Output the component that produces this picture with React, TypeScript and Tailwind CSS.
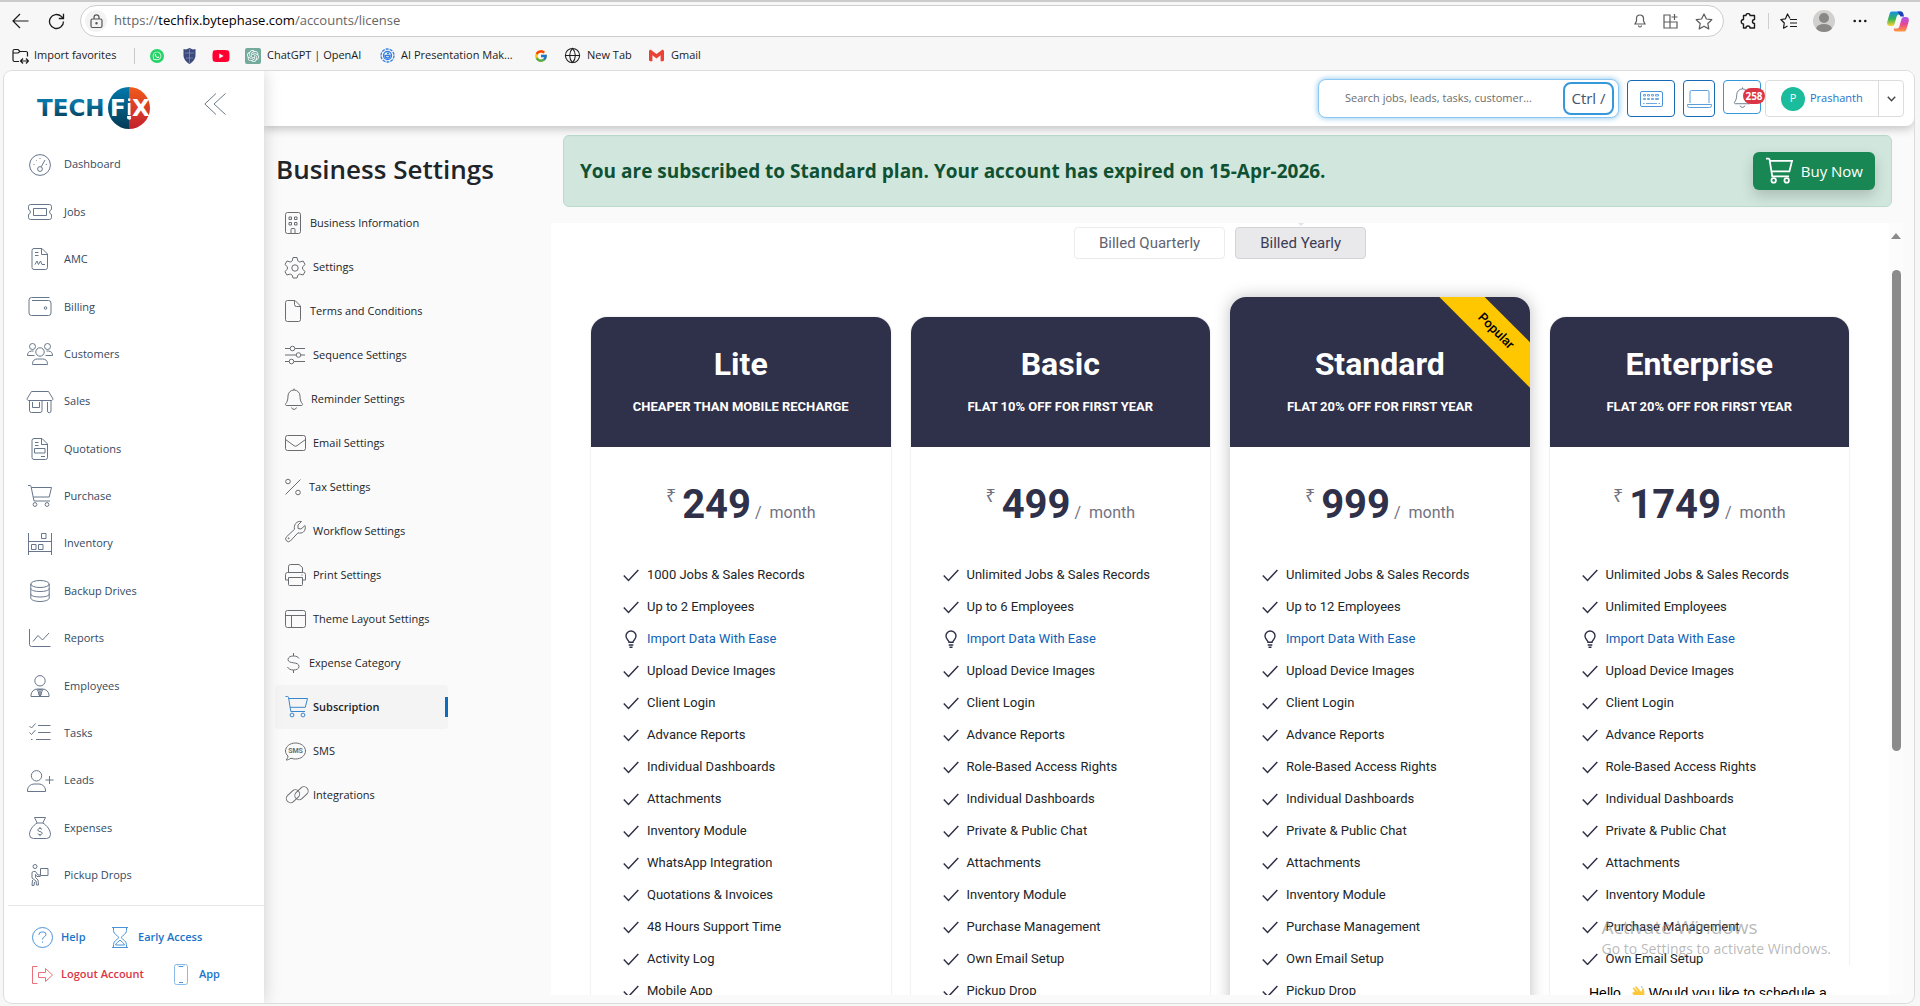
import React from 'react';
import { FcGoogle } from 'react-icons/fc';
import { SiOpenai, SiGmail } from 'react-icons/si';
import { FaWhatsapp, FaYoutube } from 'react-icons/fa';
import { LuGlobe } from 'react-icons/lu';

const UI = "font-['Open_Sans','Noto_Sans',sans-serif]";

/* ---------- thin line icons, drawn on a 26x22 grid ---------- */

const navArt: Record<string, React.ReactNode> = {
  dashboard: (
    <>
      <circle cx="13" cy="11" r="10.4" />
      <circle cx="13" cy="15" r="2.4" />
      <path d="M14.2 12.8 18 6M6.5 10.5h1M9 6l.6.6M13 4v.9M18.8 10.5h1" />
    </>
  ),
  jobs: (
    <>
      <path d="M3.5 3.5h19a2 2 0 0 1 2 2v3a2.6 2.6 0 0 0 0 5v3a2 2 0 0 1-2 2h-19a2 2 0 0 1-2-2v-3a2.6 2.6 0 0 0 0-5v-3a2 2 0 0 1 2-2z" />
      <path d="M6.5 7.5h13v7h-13z" />
    </>
  ),
  amc: (
    <>
      <path d="M7 .5h8l5.500 5.500v13.500a2 2 0 0 1-2 2H7a2 2 0 0 1-2-2v-17a2 2 0 0 1 2-2zM14.500.5v6h6M8 4.500h3.500M8 7.500h3.500M8 16.500l2-3.500 1.500 3.500 2-3.500 1.500 3.500h3" />
    </>
  ),
  billing: (
    <>
      <path d="M22.500 1.500H4.500a2.500 2.500 0 0 0-2.500 2.500v13a2.500 2.500 0 0 0 2.500 2.500h17a2.500 2.500 0 0 0 2.500-2.500V7a2.500 2.500 0 0 0-2.500-2.500H5" />
      <circle cx="18.500" cy="12" r="1.300" />
    </>
  ),
  customers: (
    <>
      <circle cx="5.500" cy="3.500" r="3" />
      <circle cx="20.500" cy="3.500" r="3" />
      <circle cx="13" cy="9" r="4.200" />
      <path d="M5.500 21.500v-1a5 5 0 0 1 5-4.500h5a5 5 0 0 1 5 4.500v1zM7.500 12.500h-7a4.500 4.500 0 0 1 4-4.500h2M18.500 12.500h7a4.500 4.500 0 0 0-4-4.500h-2" />
    </>
  ),
  sales: (
    <>
      <path d="M4.500.5h17l4 6.500a1.500 1.500 0 0 1-1.300 2.500H1.800A1.500 1.500 0 0 1 .5 7zM2.500 9.500v10a2 2 0 0 0 2 2h8.500a2 2 0 0 0 2-2v-10M5.500 11v5.500h7V11M20.500 11v9a1.500 1.500 0 0 0 3.500 0v-10" />
    </>
  ),
  quotations: (
    <path d="M7 .5h8l5.500 5.500v13.500a2 2 0 0 1-2 2H7a2 2 0 0 1-2-2v-17a2 2 0 0 1 2-2zM14.500.5v6h6M8 4.500h3.500M8 7.500h3.500M7.500 10.500h10.500v4.500H7.500zM14 18.500h4" />
  ),
  purchase: (
    <>
      <path d="M1 .5h2a1 1 0 0 1 1 .8l3 14.700h16M4.500 2.500H24.500l-2.300 9.500H6.300" />
      <circle cx="8" cy="19.500" r="1.900" />
      <circle cx="20" cy="19.500" r="1.900" />
    </>
  ),
  inventory: (
    <path d="M1.500 0v22M24.500 0v22M1.500 8.500h23M1.500 18.500h23M14.500.5h4.500v5h-4.500zM4.500 11.500H9v5H4.500zM11.500 11.500H16v5h-4.500z" />
  ),
  backup: (
    <>
      <ellipse cx="13" cy="4" rx="9.200" ry="3.500" />
      <path d="M3.800 4v14c0 1.900 4.100 3.500 9.200 3.500s9.200-1.600 9.200-3.500V4M3.800 8.500c0 1.900 4.100 3 9.200 3s9.200-1.100 9.200-3M3.800 14c0 1.900 4.100 3 9.200 3s9.200-1.100 9.200-3" />
    </>
  ),
  reports: <path d="M2.500 2v15.500a2 2 0 0 0 2 2H23.500M6 14.500l5-6 4.500 4.500 6.500-7" />,
  employees: (
    <>
      <circle cx="13" cy="5.800" r="5.200" />
      <path d="M4 21.500v-1.500a6.500 6.500 0 0 1 6.500-6h5a6.500 6.500 0 0 1 6.500 6v1.500zM10 14l3 7 3-7M11.500 14.500h3l-1 2 .8 3-1.300 2-1.300-2 .8-3z" />
    </>
  ),
  tasks: <path d="M2.500 4l2 2 4-4.500M2.500 10.500l2 2 4-4.500M4 17.500h1.500M11 3.500h12.500M11 10.500h12.500M9 17.500h14.500" />,
  leads: (
    <>
      <circle cx="9.500" cy="5.800" r="5.200" />
      <path d="M.5 21.500V20a6.500 6.500 0 0 1 6.500-6h5a6.500 6.500 0 0 1 6.500 6v1.500zM22.500 6v8M18.500 10h8" />
    </>
  ),
  expenses: (
    <path d="M7.500.5h11l-2.700 5.500h-5.600zM10.200 6C6 8.500 2.500 13 2.500 17.500a4 4 0 0 0 4 4h13a4 4 0 0 0 4-4C23.500 13 20 8.500 15.800 6M15 12.500c-.4-.8-1.200-1-2-1-1.200 0-2.200.5-2.200 1.500 0 2.200 4.400.9 4.400 3.200 0 1-1 1.500-2.200 1.500-1 0-1.800-.4-2.300-1.200M13 10v1.500M13 17.700v1.500" />
  ),
  pickup: (
    <>
      <circle cx="8" cy="2.500" r="2" />
      <path d="M13.500 4.500H21v7h-7.500zM13.500 11H11L8.500 7.500h-2a1.500 1.500 0 0 0-1.500 1.500v5l4 3 .5 4h2l-.5-5-2.500-2.500v-3l1.500 2h3.500M5.500 16 5 21.500h2l.5-3.500" />
    </>
  ),
};

const sideNav: [string, string][] = [
  ['dashboard', 'Dashboard'],
  ['jobs', 'Jobs'],
  ['amc', 'AMC'],
  ['billing', 'Billing'],
  ['customers', 'Customers'],
  ['sales', 'Sales'],
  ['quotations', 'Quotations'],
  ['purchase', 'Purchase'],
  ['inventory', 'Inventory'],
  ['backup', 'Backup Drives'],
  ['reports', 'Reports'],
  ['employees', 'Employees'],
  ['tasks', 'Tasks'],
  ['leads', 'Leads'],
  ['expenses', 'Expenses'],
  ['pickup', 'Pickup Drops'],
];

/* settings icons: [width of the drawing, art], 22 units high */
const settingsArt: Record<string, [number, React.ReactNode]> = {
  building: [
    16,
    <path d="M2.500.5h11a2 2 0 0 1 2 2v17a2 2 0 0 1-2 2h-11a2 2 0 0 1-2-2v-17a2 2 0 0 1 2-2zM4 5h2.500v2.500H4zM9.500 5H12v2.500H9.500zM4 10.500h2.500v2.500H4zM9.500 10.500H12v2.500H9.500zM6 21.500v-4a1 1 0 0 1 1-1h2a1 1 0 0 1 1 1v4" />,
  ],
  gear: [
    20,
    <>
      <path d="M8 1.500h4l.8 3.300 2 1.200 3.300-1 2 3.500-2.500 2.300v2.400l2.500 2.300-2 3.500-3.300-1-2 1.200L12 22H8l-.8-2.800-2-1.200-3.300 1-2-3.500 2.500-2.300v-2.400L0 8.500 2 5l3.300 1 2-1.200z" strokeLinejoin="round" />
      <circle cx="10" cy="12" r="3.200" />
    </>,
  ],
  file: [
    16,
    <path d="M2.500.5H10l5.500 5.500v13.500a2 2 0 0 1-2 2h-11a2 2 0 0 1-2-2v-17a2 2 0 0 1 2-2zM9.500.5v4a2 2 0 0 0 2 2h4" />,
  ],
  sliders: [
    20,
    <>
      <path d="M0 4.500h5M10 4.500h10M0 11h11M16 11h4M0 17.500h4M9 17.500h11" />
      <circle cx="7.500" cy="4.500" r="2.300" />
      <circle cx="13.500" cy="11" r="2.300" />
      <circle cx="6.500" cy="17.500" r="2.300" />
    </>,
  ],
  bell: [18, <path d="M9 .5V2M9 2a6 6 0 0 0-6 6c0 4.500-1.200 6.200-2.300 7.800-.5.700-.1 1.700.8 1.700h15c.9 0 1.300-1 .8-1.700C16.200 14.200 15 12.500 15 8a6 6 0 0 0-6-6zM6.500 19.500a2.600 2.600 0 0 0 5 0" />],
  mail: [21, <path d="M2.500 3.500h16a2 2 0 0 1 2 2v11a2 2 0 0 1-2 2h-16a2 2 0 0 1-2-2v-11a2 2 0 0 1 2-2zM.5 7.500l8.500 6.200a2.500 2.500 0 0 0 3 0l8.500-6.200" />],
  percent: [
    16,
    <>
      <path d="M15.500 3.500.5 18.500" />
      <circle cx="3" cy="5.500" r="2.300" />
      <circle cx="13" cy="16.500" r="2.300" />
    </>,
  ],
  wrench: [
    21,
    <>
      <path d="M16.500 1.500l-3.500 3.500v3.500l3 .5 4-3.500c1 3-.3 7-4 7.500-1 .2-2 .1-3-.2l-7.500 8a2.800 2.800 0 0 1-4-4l8-7.500C8.500 5 11.500.5 16.500 1.500z" />
      <circle cx="3.700" cy="18.300" r=".5" />
    </>,
  ],
  printer: [
    21,
    <path d="M3.500 8V2.500a2 2 0 0 1 2-2h8.500l3.500 3V8M2.500 8.500h16a2 2 0 0 1 2 2v5.500h-3M3.500 16h-3v-5.500a2 2 0 0 1 2-2M3.500 13.500h14v7a1 1 0 0 1-1 1h-12a1 1 0 0 1-1-1zM17 10.500v1" />,
  ],
  layout: [21, <path d="M2.500 2.500h16a2 2 0 0 1 2 2v13a2 2 0 0 1-2 2h-16a2 2 0 0 1-2-2v-13a2 2 0 0 1 2-2zM.5 7.500h20M6.500 7.500v12" />],
  dollar: [17, <path d="M8.500 1v3M8.500 18v3M14 6.500c-.8-1.600-2.800-2.500-5.500-2.500-3 0-5.500 1.200-5.500 3.500C3 12.500 14 9 14 14.500c0 2.300-2.500 3.500-5.500 3.500-2.800 0-5-1-6-3" />],
  cart: [
    22,
    <>
      <path d="M.5.5h2a1 1 0 0 1 1 .8l2.300 14.200h14.200M3.700 2.500H22.500l-2.200 8.800H5.200" />
      <circle cx="7" cy="19" r="1.900" />
      <circle cx="18" cy="19" r="1.900" />
    </>,
  ],
  sms: [
    21,
    <>
      <path d="M1 20c1.300-1 2-2.500 2-4C1.500 14.700.5 12.900.5 11c0-4.400 4.400-8 10-8s10 3.600 10 8-4.400 8-10 8c-1.600 0-3.100-.2-4.500-.8C4.500 19.200 3 20 1 20z" />
      <text x="10.500" y="13.400" textAnchor="middle" fontSize="7" fontWeight="700" stroke="none" fill="currentColor" fontFamily="Roboto, sans-serif">SMS</text>
    </>,
  ],
  link: [
    24,
    <>
      <rect x="0.500" y="8" width="15" height="8.500" rx="4.250" transform="rotate(-42 8 12.250)" />
      <rect x="9" y="5" width="15" height="8.500" rx="4.250" transform="rotate(-42 16.500 9.250)" />
    </>,
  ],
};

const settingsNav: [string, string, string][] = [
  ['building', 'Business Information', 'gap-[9px]'],
  ['gear', 'Settings', 'gap-2'],
  ['file', 'Terms and Conditions', 'gap-[9px]'],
  ['sliders', 'Sequence Settings', 'gap-2'],
  ['bell', 'Reminder Settings', 'gap-2'],
  ['mail', 'Email Settings', 'gap-[7px]'],
  ['percent', 'Tax Settings', 'gap-2'],
  ['wrench', 'Workflow Settings', 'gap-[7px]'],
  ['printer', 'Print Settings', 'gap-[7px]'],
  ['layout', 'Theme Layout Settings', 'gap-[7px]'],
  ['dollar', 'Expense Category', 'gap-[7px]'],
  ['cart', 'Subscription', 'gap-1.5'],
  ['sms', 'SMS', 'gap-[7px]'],
  ['link', 'Integrations', 'gap-1'],
];

const plans = [
  {
    name: 'Lite',
    note: 'Cheaper than mobile recharge',
    price: '249',
    features: ['1000 Jobs & Sales Records', 'Up to 2 Employees', 'Import Data With Ease', 'Upload Device Images', 'Client Login', 'Advance Reports', 'Individual Dashboards', 'Attachments', 'Inventory Module', 'WhatsApp Integration', 'Quotations & Invoices', '48 Hours Support Time', 'Activity Log', 'Mobile App'],
  },
  {
    name: 'Basic',
    note: 'Flat 10% off for first year',
    price: '499',
    features: ['Unlimited Jobs & Sales Records', 'Up to 6 Employees', 'Import Data With Ease', 'Upload Device Images', 'Client Login', 'Advance Reports', 'Role-Based Access Rights', 'Individual Dashboards', 'Private & Public Chat', 'Attachments', 'Inventory Module', 'Purchase Management', 'Own Email Setup', 'Pickup Drop'],
  },
  {
    name: 'Standard',
    note: 'Flat 20% off for first year',
    price: '999',
    popular: true,
    features: ['Unlimited Jobs & Sales Records', 'Up to 12 Employees', 'Import Data With Ease', 'Upload Device Images', 'Client Login', 'Advance Reports', 'Role-Based Access Rights', 'Individual Dashboards', 'Private & Public Chat', 'Attachments', 'Inventory Module', 'Purchase Management', 'Own Email Setup', 'Pickup Drop'],
  },
  {
    name: 'Enterprise',
    note: 'Flat 20% off for first year',
    price: '1749',
    features: ['Unlimited Jobs & Sales Records', 'Unlimited Employees', 'Import Data With Ease', 'Upload Device Images', 'Client Login', 'Advance Reports', 'Role-Based Access Rights', 'Individual Dashboards', 'Private & Public Chat', 'Attachments', 'Inventory Module', 'Purchase Management', 'Own Email Setup'],
  },
];

function BrowserChrome() {
  return (
    <div className="shrink-0 text-[11px] text-[#1b1b1b]">
      <div className="flex h-[38px] items-center pl-3 pr-[11px]">
        <button aria-label="Back" className="mr-[19px]">
          <svg width="17" height="16" viewBox="0 0 17 16" fill="none" stroke="#1b1b1b" strokeWidth="1.200"><path d="M16.500 8H1M8 1 1 8l7 7" /></svg>
        </button>
        <button aria-label="Reload" className="mr-[15px]">
          <svg width="17" height="17" viewBox="0 0 17 17" fill="none" stroke="#1b1b1b" strokeWidth="1.300"><path d="M15.500 8.500a7 7 0 1 1-2.200-5.100L15.500 5.500M15.500.8v4.700h-4.700" /></svg>
        </button>
        <div className="flex h-8 flex-1 items-center rounded-full border border-[#cdcdcd] bg-white pl-1 pr-[10px]">
          <span className="flex size-[22px] items-center justify-center rounded-full bg-[#f3f3f3]">
            <svg width="13" height="15" viewBox="0 0 13 15" fill="none" stroke="#555" strokeWidth="1.200"><rect x="1" y="5" width="11" height="8.500" rx="1.500" /><path d="M4 5V3.300a2.500 2.500 0 0 1 5 0V5" /><circle cx="6.500" cy="9.200" r=".6" fill="#555" /></svg>
          </span>
          <span className="ml-[7px] flex-1 text-[13px] text-[#666]">https://<span className="text-black">techfix.bytephase.com</span>/accounts/license</span>
          <div className="flex items-center gap-[17px] text-[#5c5c5c]">
            <svg width="12" height="14" viewBox="0 0 12 14" fill="none" stroke="currentColor" strokeWidth="1.200"><path d="M6 1a3.500 3.500 0 0 0-3.500 3.500V7L1 10h10L9.500 7V4.500A3.500 3.500 0 0 0 6 1zM4.500 11.500a1.500 1.500 0 0 0 3 0" /></svg>
            <svg width="15" height="15" viewBox="0 0 15 15" fill="none" stroke="currentColor" strokeWidth="1.200"><path d="M7 1H1v13h13V8H7zM1 8h6v6M11.500 0v6M8.500 3h6" /></svg>
            <svg width="18" height="17" viewBox="0 0 18 17" fill="none" stroke="currentColor" strokeWidth="1.200"><path d="m9 1 2.400 5 5.400.7-4 3.800 1 5.400L9 13.300 4.200 15.900l1-5.400-4-3.800 5.400-.7z" strokeLinejoin="round" /></svg>
          </div>
        </div>
        <div className="ml-4 flex items-center gap-[11px]">
          <svg width="17" height="17" viewBox="0 0 17 17" fill="none" stroke="#1b1b1b" strokeWidth="1.400" strokeLinejoin="round"><path d="M6 2.500a2 2 0 0 1 4 0h4.500v4a2 2 0 0 0 0 4v4.500H10a2 2 0 0 0-4 0H3.500v-4a2.200 2.200 0 0 1 0-4.500v-4z" /></svg>
          <span className="h-4 w-px bg-[#cfcfcf]" />
          <svg width="17" height="17" viewBox="0 0 17 17" fill="none" stroke="#1b1b1b" strokeWidth="1.200"><path d="M10 5.500 7.500 1 5.500 5.800.8 6.500l3.500 3.500-.8 5.200 4-2.200M10 6.500h7M10 10h7M10 13.500h7" strokeLinejoin="round" /></svg>
          <span className="ml-[5px] flex size-[22px] overflow-hidden rounded-full">
            <svg width="22" height="22" viewBox="0 0 22 22"><rect width="22" height="22" fill="#d2d0ce" /><circle cx="11" cy="8" r="5" fill="#8a8886" /><ellipse cx="11" cy="19" rx="8" ry="5" fill="#8a8886" /></svg>
          </span>
          <svg className="ml-[7px]" width="14" height="4" viewBox="0 0 14 4" fill="#1b1b1b"><circle cx="1.700" cy="2" r="1.300" /><circle cx="7" cy="2" r="1.300" /><circle cx="12.300" cy="2" r="1.300" /></svg>
          <svg className="ml-[9px]" width="22" height="21" viewBox="0 0 22 21">
            <defs>
              <linearGradient id="cpA" x1="0" y1="0" x2="0" y2="1"><stop offset="0" stopColor="#1a8fe8" /><stop offset=".5" stopColor="#2fb457" /><stop offset="1" stopColor="#ffd02b" /></linearGradient>
              <linearGradient id="cpB" x1="0" y1="0" x2="0" y2="1"><stop offset="0" stopColor="#a855f7" /><stop offset=".5" stopColor="#e9488f" /><stop offset="1" stopColor="#ff9a3c" /></linearGradient>
            </defs>
            <path d="M5 .5h8.500c1.500 0 2 1.500 1.500 3l-3 0c-1.500 0-2 1-2.500 2.500L7.500 13c-.4 1.300-1.200 2-2.500 2H3c-2.300 0-3.300-2-2.700-4.200L2.500 3C3 1.300 3.600.5 5 .5z" fill="url(#cpA)" />
            <path d="M10.500.5h3.500c1.500 0 2 1 2.500 3l.5 2h-3.500z" fill="#1d3fb8" />
            <path d="M17 20.500H8.500c-1.500 0-2-1.500-1.500-3h3c1.500 0 2-1 2.500-2.500l2-7c.4-1.300 1.200-2 2.500-2h2c2.300 0 3.300 2 2.700 4.200L19.500 18c-.5 1.700-1.100 2.500-2.500 2.500z" fill="url(#cpB)" />
          </svg>
        </div>
      </div>
      <div className="flex h-[31px] items-center pl-3">
        <svg width="17" height="16" viewBox="0 0 17 16" fill="none" stroke="#1b1b1b" strokeWidth="1.200"><path d="M7 13.500H2.500a1.500 1.500 0 0 1-1.500-1.500V3a1.500 1.500 0 0 1 1.500-1.500H6l2 2h6A1.500 1.500 0 0 1 15.500 5v3.500M1 5h5l2-1.500M9 13h7.500M11 10.500 8.500 13l2.500 2.500M14 10.500l2.500 2.500-2.500 2.500" /></svg>
        <a href="#import" className="ml-[5px] w-[85px] whitespace-nowrap">Import favorites</a>
        <span className="mx-[15px] h-4 w-px bg-[#c8c8c8]" />
        <FaWhatsapp className="size-[14px] rounded-full bg-[#25d366] p-0.5 text-white" />
        <svg className="ml-[19px]" width="13" height="16" viewBox="0 0 13 16"><path d="M.5 1 3 1.500 6.500 0 10 1.500l2.500-.5v6c0 4-2.500 7-6 9-3.500-2-6-5-6-9z" fill="#3b4a7a" /><path d="M6.500 1v14M2 5h9M3 10h7" stroke="#8b96bd" strokeWidth=".7" /></svg>
        <FaYoutube className="ml-4 size-[18px] text-[#ff0033]" />
        <span className="ml-[15px] flex size-4 items-center justify-center rounded-[2px] bg-[#74aa9c]"><SiOpenai className="size-3 text-white" /></span>
        <a href="#chatgpt" className="ml-1.5 w-[113px] whitespace-nowrap">ChatGPT | OpenAI</a>
        <svg width="15" height="15" viewBox="0 0 15 15" fill="none" stroke="#2f7de1" strokeWidth="1.300"><circle cx="7.500" cy="7.500" r="6.500" strokeDasharray="3 1" /><circle cx="7.500" cy="7.500" r="4" /><path d="M5 7.500h5a2.500 2.500 0 0 1-5 0zM7 5.500h2" /></svg>
        <a href="#ai" className="ml-1.5 w-[133px] whitespace-nowrap">AI Presentation Mak...</a>
        <FcGoogle className="size-[14px]" />
        <LuGlobe className="ml-4 size-[17px]" strokeWidth={1.5} />
        <a href="#tab" className="ml-1.5 w-[62px] whitespace-nowrap">New Tab</a>
        <SiGmail className="size-[15px] text-[#ea4335]" />
        <a href="#gmail" className="ml-[7px]">Gmail</a>
      </div>
    </div>
  );
}

function Logo() {
  return (
    <svg width="118" height="44" viewBox="0 0 118 44" role="img" aria-label="TechFix">
      <defs>
        <linearGradient id="lgBlue" x1="0" y1="0" x2="0" y2="1"><stop offset="0" stopColor="#0079ad" /><stop offset="1" stopColor="#033a54" /></linearGradient>
        <linearGradient id="lgRed" x1="0" y1="0" x2="0" y2="1"><stop offset="0" stopColor="#f05a1a" /><stop offset="1" stopColor="#c3202e" /></linearGradient>
        <linearGradient id="lgText" x1="0" y1="0" x2="0" y2="1"><stop offset=".3" stopColor="#0a76a5" /><stop offset=".9" stopColor="#063e58" /></linearGradient>
      </defs>
      <path d="M93 1a21 21 0 0 0 0 42z" fill="url(#lgBlue)" />
      <path d="M93 1a21 21 0 0 1 0 42z" fill="url(#lgRed)" />
      <g fontFamily="'DejaVu Sans', sans-serif" fontWeight="700" fontSize="23">
        <text x="1" y="30" fill="url(#lgText)">TECH</text>
        <text x="74" y="30" fill="#fff">F</text>
        <text x="96" y="30" fill="#fff">X</text>
      </g>
      <path d="M92 12.500h2.500l-.3 2.500h-2zM91.800 17h2.700v12h-2.700zM91 30h4.300l-.6 2 .6 1-2 .8-2-.8z" fill="#fff" />
    </svg>
  );
}

function Sidebar() {
  return (
    <aside className="relative z-20 flex w-[260px] shrink-0 flex-col bg-white shadow-[0_0_16px_rgba(0,0,0,0.18)]">
      <div className="flex h-[70px] items-center justify-between pl-8 pr-[38px] pt-1">
        <Logo />
        <button aria-label="Collapse menu" className="mb-2">
          <svg width="22" height="22" viewBox="0 0 22 22" fill="none" stroke="#6b7a8d"><path d="M12 .5 .8 11 12 21.500M21.500.5 10 11l11.500 10.500" /></svg>
        </button>
      </div>
      <nav className="grid flex-1 auto-rows-fr text-[11px] text-[#34495e]">
        {sideNav.map(([id, label]) => (
          <a key={id} href={'#' + id} className="flex items-center gap-[11px] pl-[23px]">
            <svg width="26" height="22" viewBox="0 0 26 22" fill="none" stroke="#67768a" className="overflow-visible">{navArt[id]}</svg>
            {label}
          </a>
        ))}
      </nav>
      <div className="ml-1 mt-1.5 flex h-[98px] flex-col gap-4 border-t border-[#e6e6e6] pl-6 pt-[21px] text-[11px] font-semibold text-[#1b74c9]">
        <div className="flex h-[21px] items-center">
          <a href="#help" className="flex w-20 items-center gap-2">
            <svg width="21" height="21" viewBox="0 0 21 21" fill="none" stroke="#4a93d9"><circle cx="10.500" cy="10.500" r="10" /><path d="M7 8V7.500a2.500 2.500 0 0 1 2.500-2.500h2A2.500 2.500 0 0 1 14 7.500c0 2.500-3.500 2-3.500 5M10.500 14.500v1.200" /></svg>
            Help
          </a>
          <a href="#early" className="flex items-center gap-[10px]">
            <svg width="16" height="21" viewBox="0 0 16 21" fill="none" stroke="#4a93d9"><path d="M0 .5h16M0 20.500h16M1.500.5v3c0 3.500 4 5 5.500 7-1.500 2-5.500 3.500-5.500 7v3M14.500.5v3c0 3.500-4 5-5.500 7 1.500 2 5.500 3.500 5.500 7v3M3.500 18c1-3 3.500-3 4.500-5 1 2 3.500 2 4.500 5z" /></svg>
            Early Access
          </a>
        </div>
        <div className="flex h-[21px] items-center">
          <a href="#logout" className="flex w-[142px] items-center gap-2 text-[#dc3545]">
            <svg width="21" height="18" viewBox="0 0 21 18" fill="none" stroke="#e8717c"><path d="M5.500.5h-5v17h5M6.500 6.500h7v-4l7 6.500-7 6.500v-4h-7z" /></svg>
            Logout Account
          </a>
          <a href="#app" className="flex items-center gap-[11px]">
            <svg width="14" height="21" viewBox="0 0 14 21" fill="none" stroke="#8abbe8"><rect x=".5" y=".5" width="13" height="20" rx="2" /><path d="M4 1.500l1 1h4l1-1M5 18.500h4" stroke="#4a93d9" /></svg>
            App
          </a>
        </div>
      </div>
    </aside>
  );
}

function Header() {
  return (
    <header className="relative z-10 flex h-[55px] shrink-0 items-start justify-end rounded-br-lg bg-white pr-[10px] pt-[7px] shadow-[0_3px_10px_rgba(0,0,0,0.22)]">
      <div className="mr-2 mt-px flex h-[39px] w-[301px] items-center rounded-lg border border-[#8cc8f4] bg-white pr-1 shadow-[0_0_5px_1px_rgba(52,152,219,0.45)]">
        <input aria-label="Search" placeholder="Search jobs, leads, tasks, customer..." className="min-w-0 flex-1 bg-transparent pl-[26px] text-[11px] outline-none placeholder:text-[#6d6d6d]" />
        <kbd className={`${UI} flex h-[33px] w-[51px] items-center justify-center rounded-lg border-2 border-[#3498db] text-[15px] text-[#44546a]`}>Ctrl /</kbd>
      </div>
      <button aria-label="Keyboard" className="mr-2 mt-[2px] flex h-[37px] w-12 items-center justify-center rounded border border-[#1769b5]">
        <svg width="23" height="16" viewBox="0 0 23 16" fill="none" stroke="#4a93d9"><rect x=".5" y=".5" width="22" height="15" rx="1.500" /><path d="M3.500 3.500h2v1.500h-2zM7.500 3.500h2v1.500h-2zM11.500 3.500h2v1.500h-2zM15.500 3.500h3v1.500h-3zM3.500 7.500h2v1h-2zM7.500 7.500h2v1h-2zM11.500 7.500h2v1h-2zM15.500 7.500h3v1h-3zM3 12.500h1.500M6 12.500h11M18.500 12.500H20" strokeWidth=".8" /></svg>
      </button>
      <button aria-label="Desktop view" className="mr-2 mt-[2px] flex h-[37px] w-8 items-center justify-center rounded border border-[#1769b5]">
        <svg width="25" height="18" viewBox="0 0 25 18" fill="none" stroke="#5a9edb"><path d="M3 13V2A1.500 1.500 0 0 1 4.500.5h16A1.500 1.500 0 0 1 22 2v11M.5 14.500h24v1a2 2 0 0 1-2 2h-20a2 2 0 0 1-2-2z" /></svg>
      </button>
      <button aria-label="Notifications, 258 new" className="relative mr-1 mt-[2px] flex h-[34px] w-[38px] items-center justify-center rounded border border-[#3498db]">
        <svg width="19" height="21" viewBox="0 0 18 22" fill="none" stroke="#6b7a8d">{settingsArt.bell[1]}</svg>
        <span className="absolute -right-[5px] top-[7px] flex h-4 w-[22px] items-center justify-center rounded-full bg-[#dc3545] font-['Open_Sans',sans-serif] text-[10px] font-bold text-white">258</span>
      </button>
      <div className="mt-[2px] flex h-[37px] w-[139px] rounded border border-[#dcdcdc]">
        <button className="flex flex-1 items-center gap-[5px] border-r border-[#dcdcdc] pl-[15px] text-[11px] text-[#1b74c9]">
          <span className="flex size-6 shrink-0 items-center justify-center rounded-full bg-[#1abc9c] text-[11px] text-white">P</span>
          Prashanth
        </button>
        <button aria-label="Open account menu" className="flex w-6 items-center justify-center">
          <svg width="9" height="6" viewBox="0 0 9 6" fill="none" stroke="#444" strokeWidth="1.400"><path d="m.8.8 3.700 4 3.700-4" /></svg>
        </button>
      </div>
    </header>
  );
}

function SettingsMenu() {
  return (
    <section className="w-[287px] shrink-0 pl-3 pt-[21px]">
      <h1 className="whitespace-nowrap text-[26px] font-semibold leading-[44px] text-[#212529]">Business Settings</h1>
      <nav className="-ml-px mt-[10px] w-[173px] text-[11px] text-[#212529]">
        {settingsNav.map(([id, label, gap]) => {
          const [w, art] = settingsArt[id];
          const on = id === 'cart';
          return (
            <a
              key={id}
              href={'#' + id}
              className={`relative flex h-11 items-center whitespace-nowrap pl-2.5 ${gap} ${on ? 'rounded bg-[#f4f4f4] font-semibold' : ''}`}
            >
              <svg width={w} height="22" viewBox={`0 0 ${w} 22`} fill="none" stroke={on ? '#3a86cc' : '#6a6d70'} className="overflow-visible text-[#6a6d70]">{art}</svg>
              {label}
              {on && <span className="absolute right-0 top-3 h-5 w-[3px] bg-[#0f6cbd]" />}
            </a>
          );
        })}
      </nav>
    </section>
  );
}

function Feature({ label }: { label: string }) {
  const link = label.startsWith('Import');
  return (
    <li className="flex h-8 items-center gap-2">
      {link ? (
        <svg width="16" height="18" viewBox="0 0 16 18" fill="none" stroke="#2f3049" strokeWidth="1.400"><path d="M6 12.300c0-2-3-3-3-6.300a5 5 0 0 1 10 0c0 3.300-3 4.300-3 6.300zM5.700 15h4.600M6.500 17.200h3" /></svg>
      ) : (
        <svg width="16" height="14" viewBox="0 0 16 14" fill="none" stroke="#2f3049" strokeWidth="1.500"><path d="m.8 7.500 4.700 5L15.300 2" /></svg>
      )}
      {link ? <a href="#import-data" className="text-[#0f62b4]">{label}</a> : label}
    </li>
  );
}

function Plan({ plan }: { plan: (typeof plans)[number] }) {
  const p = plan.popular;
  return (
    <article className={`relative overflow-hidden rounded-t-2xl bg-white ${p ? '-mt-5 shadow-[0_0_16px_rgba(0,0,0,0.25)]' : 'shadow-[0_0_2px_rgba(0,0,0,0.18)]'}`}>
      <header className={`bg-[#2f3049] pb-[30px] text-center text-white ${p ? 'pt-[47px]' : 'pt-[27px]'}`}>
        <h2 className="text-[32px] font-bold leading-10">{plan.name}</h2>
        <p className="mt-[13px] text-[13px] font-bold uppercase leading-5">{plan.note}</p>
      </header>
      {p && (
        <span className="absolute -right-[46px] top-[18px] flex h-8 w-40 rotate-45 items-center justify-center bg-[#ffc700] text-[13px] font-medium text-black">Popular</span>
      )}
      <p className="flex h-[112px] items-start justify-center pt-[34px] text-[#71717f]">
        <span className="mr-1.5 pt-[2px] font-['Noto_Sans',sans-serif] text-lg leading-6">₹</span>
        <span className="text-[40px] font-bold leading-[48px] text-[#2f3049]">{plan.price}</span>
        <span className="ml-1 pt-5 text-base leading-6">/&nbsp; month</span>
      </p>
      <ul className="pb-16 pl-8 text-[13px] text-[#212529]">
        {plan.features.map((f) => (
          <Feature key={f} label={f} />
        ))}
      </ul>
    </article>
  );
}

export default function App() {
  return (
    <div className={`${UI} flex h-screen flex-col overflow-hidden border-t-2 border-[#cbcbcb] bg-[#f7f7f7]`}>
      <BrowserChrome />
      <div className="relative mb-[3px] ml-1 mr-[6px] flex min-h-0 flex-1 overflow-hidden rounded-lg bg-[#fafafa] shadow-[0_0_0_1px_#dcdcdc]">
        <Sidebar />
        <div className="flex min-w-0 flex-1 flex-col">
          <Header />
          <div className="flex min-h-0 flex-1">
            <SettingsMenu />
            <main className="flex min-w-0 flex-1 flex-col pb-2 pr-[11px] pt-[9px]">
              <div className="ml-3 mr-[11px] flex h-[72px] shrink-0 items-center justify-between rounded-md border border-[#badbcc] bg-[#d1e7dd] px-4">
                <strong className="text-[19px] font-bold text-[#0f5132]">You are subscribed to Standard plan. Your account has expired on 15-Apr-2026.</strong>
                <button className="flex h-[38px] items-center gap-2 rounded-md bg-[#198754] px-3 text-[15px] text-white shadow-[0_6px_14px_rgba(0,0,0,0.18)]">
                  <svg width="28" height="26" viewBox="0 0 23 22" fill="none" stroke="#fff" strokeWidth="1.500" className="overflow-visible">{settingsArt.cart[1]}</svg>
                  Buy Now
                </button>
              </div>
              <div className="relative mt-4 flex min-h-0 flex-1 overflow-hidden bg-white font-['Roboto',sans-serif]">
                <div className="min-w-0 flex-1 px-10 pt-1">
                  <div className="flex justify-center gap-2.5 text-[15px]">
                    <button className="h-8 rounded border border-[#ececee] bg-white px-6 text-[#62636f]">Billed Quarterly</button>
                    <button className="relative h-8 rounded border border-[#d3d3d8] bg-[#e9e9ec] px-6 text-[#3b3c55]">
                      Billed Yearly
                      <svg className="absolute -top-[5px] left-1/2 -ml-[3px]" width="6" height="3" viewBox="0 0 6 3" fill="#e4e4e8"><path d="M0 0h6L3 3z" /></svg>
                    </button>
                  </div>
                  <div className="mt-[58px] grid grid-cols-4 gap-5">
                    {plans.map((p) => (
                      <Plan key={p.name} plan={p} />
                    ))}
                  </div>
                </div>
                <div className="flex w-[14px] flex-col items-center bg-[#fcfcfc] pt-[10px]">
                  <svg width="10" height="6" viewBox="0 0 10 6"><path d="M5 0l5 6H0z" fill="#8b8b8b" /></svg>
                  <div className="mt-[31px] h-[481px] w-[9px] rounded-full bg-[#8b8b8b]" />
                </div>
                <div className="absolute bottom-0 right-11 flex h-[30px] w-[286px] items-end overflow-hidden whitespace-nowrap rounded-t-xl bg-white pl-4 font-['Liberation_Sans',sans-serif] text-sm text-black">
                  <p className="-mb-2 flex items-center">
                    Hello,
                    <svg className="ml-1.5 mr-[3px]" width="15" height="17" viewBox="0 0 16 17"><path d="M4 6 2 3.500C1.500 2.500 2.700 1.700 3.500 2.500L8 7 4.500 2C4 1 5.200.3 6 1.200L11 7l1-3.500c.3-1 1.800-.8 1.800.3l.7 7.200c0 3-2.500 5.500-5.500 5-2-.3-3-1.500-4-3L1.500 8.500C1 7.500 2 6.800 2.800 7.500z" fill="#fbc83b" /><path d="M10.500 1c1 .3 1.600 1 1.800 1.800M.8 12c.2 1.500 1 2.500 2.200 3" stroke="#7cb9e8" fill="none" /></svg>
                    Would you like to schedule a
                  </p>
                </div>
              </div>
            </main>
          </div>
        </div>
        <div className="pointer-events-none absolute bottom-[45px] right-[83px] z-30 text-[#8a8a8a]/60">
          <p className="text-[19px] leading-[26px]">Activate Windows</p>
          <p className="text-sm leading-[18px]">Go to Settings to activate Windows.</p>
        </div>
      </div>
    </div>
  );
}
